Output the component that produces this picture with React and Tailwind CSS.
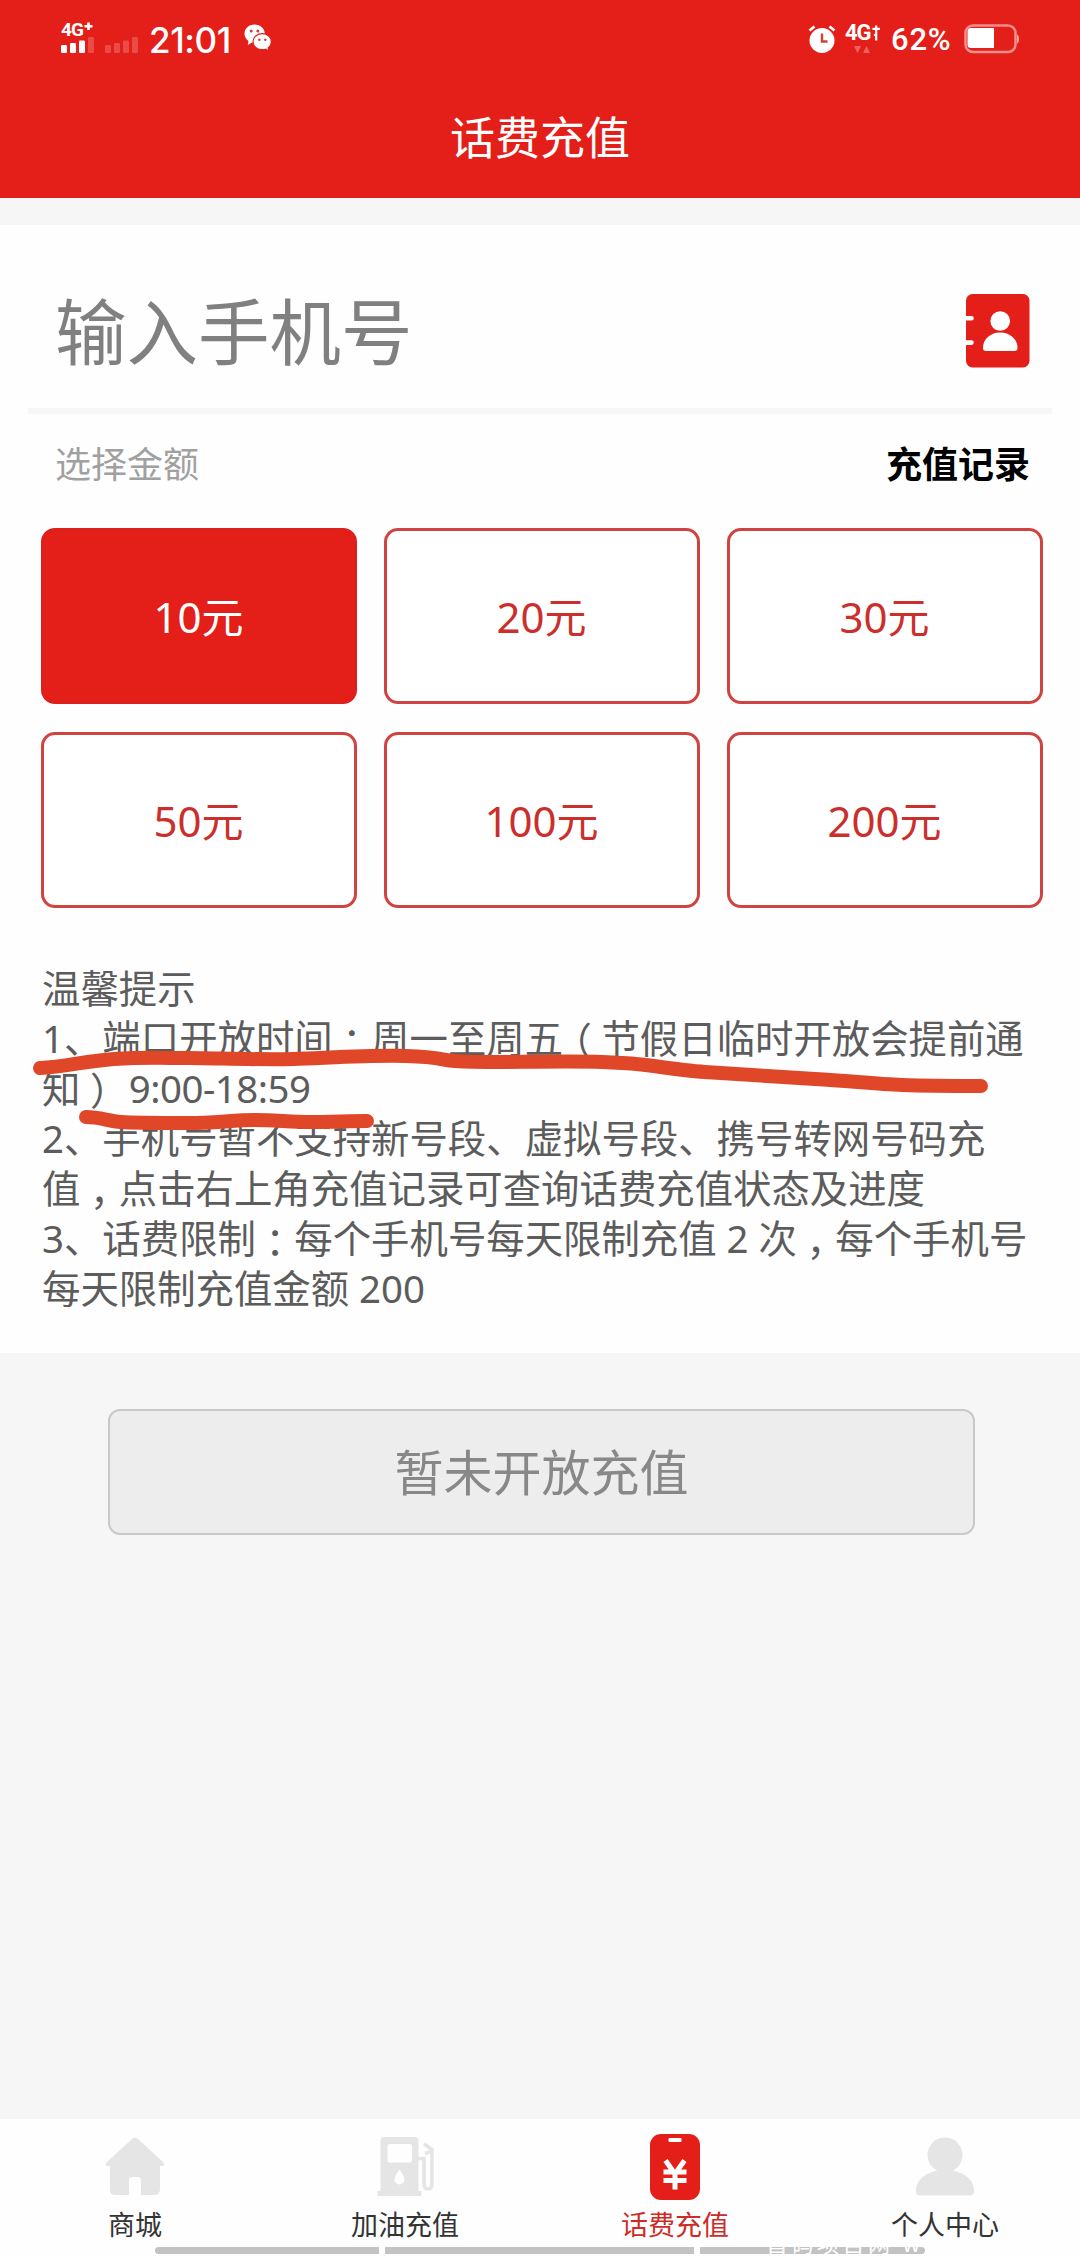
function Signal({ strong }) {
  const bars = [
    [0, 8],
    [9, 10],
    [18, 12.5],
    [27, 16],
  ];
  return (
    <svg width="33" height="16" viewBox="0 0 33 16" className="block">
      {bars.map(([x, h], i) => (
        <rect key={x} x={x} y={16 - h} width="6" height={h} rx="1.2" fill="#fff" opacity={strong && i < 3 ? 1 : 0.2} />
      ))}
    </svg>
  );
}

function WeChat() {
  return (
    <svg width="28" height="28" viewBox="0 0 28 28" className="block">
      <path d="M10.5 0.5C4.900 0.500 0.500 4.500 0.500 9.600c0 3.200 1.500 5.600 4 7.300L3.800 21l4.200-2.500c4.500 1 12.500-2 12.800-8.900C20.800 4.500 16.200 0.500 10.500 0.500z" fill="#fff" />
      <circle cx="7.200" cy="7" r="1.500" fill="#c2423c" />
      <circle cx="13.800" cy="7" r="1.500" fill="#c2423c" />
      <path d="M18.300 9.700c-5.200 0-9.300 3.500-9.300 8s4.100 8 9.300 8c1.200 0 2.300-.2 3.300-.5l3.400 1.900-.8-3.200c2-1.500 3.200-3.700 3.200-6.200 0-4.500-4-8-9.100-8z" fill="#fff" stroke="#e41f1a" strokeWidth="1.200" />
      <circle cx="15.300" cy="15.700" r="1.200" fill="#c2423c" />
      <circle cx="21.300" cy="15.700" r="1.200" fill="#c2423c" />
    </svg>
  );
}

function Alarm() {
  return (
    <svg width="28" height="28" viewBox="0 0 28 28" className="block">
      <circle cx="14" cy="15.500" r="12.500" fill="#fff" />
      <path d="M1.500 5.500L6.500 1.500M26.500 5.500L21.500 1.500" stroke="#fff" strokeWidth="2.800" />
      <path d="M14 8.500V16.500H19.500" fill="none" stroke="#d0403a" strokeWidth="2.400" />
    </svg>
  );
}

function Battery() {
  return (
    <svg width="56" height="30" viewBox="0 0 56 30" className="block">
      <rect x="1.500" y="1.500" width="50" height="26.500" rx="7.500" fill="none" stroke="#fff" strokeOpacity=".5" strokeWidth="2.500" />
      <path d="M7 4H30V24H7Q3.500 24 3.500 20.500V7.500Q3.500 4 7 4Z" fill="#fff" />
      <path d="M53 10.500q2 .5 2 4.500t-2 4.500z" fill="#fff" fillOpacity=".6" />
    </svg>
  );
}

function StatusBar() {
  return (
    <div className="flex h-20 items-start justify-between pr-[60px] pl-[61px] text-white">
      <div className="flex items-start">
        <div className="flex w-[33px] flex-col pt-[22px]">
          <div className='flex h-[15px] items-center font-["Roboto",sans-serif] text-[19px] leading-none font-bold tracking-[-1px]'>
            4G
            <svg width="9" height="9" viewBox="0 0 9 9" className="mb-[7px] ml-px">
              <path d="M4.500 0.500V8M0.500 4.200H8.500" stroke="#fff" strokeWidth="2.600" />
            </svg>
          </div>
          <Signal strong />
        </div>
        <div className="mt-[37px] ml-[11px]">
          <Signal />
        </div>
        <span className='mt-[20px] ml-[11px] w-[83px] font-["Inter",sans-serif] text-[35px] leading-[40px] font-medium tracking-[-0.4px] whitespace-nowrap'>21:01</span>
        <div className="mt-[24px] ml-[12px]">
          <WeChat />
        </div>
      </div>
      <div className="flex items-start">
        <div className="mt-[25px]">
          <Alarm />
        </div>
        <div className="mt-[23px] ml-[9px] flex w-[35px] flex-col">
          <div className='flex h-[19px] items-center font-["Roboto",sans-serif] text-[22px] leading-none font-bold tracking-[-1px]'>
            4G
            <svg width="9" height="18" viewBox="0 0 9 18" className="ml-px">
              <path d="M4.500 1V17M0.500 4.500H8.500M2.500 12L4.500 10" fill="none" stroke="#fff" strokeWidth="2.400" />
            </svg>
          </div>
          <svg width="17" height="8" viewBox="0 0 17 8" className="mt-[4px] ml-[9px]">
            <path d="M0 0H7L3.500 7ZM9 7H16L12.500 0Z" fill="#fff" opacity=".3" />
          </svg>
        </div>
        <span className='mt-[20px] ml-[11px] w-[60px] font-["Roboto",sans-serif] text-[31px] leading-[40px] font-medium tracking-[0.8px] whitespace-nowrap'>62%</span>
        <div className="mt-[24px] ml-[13px]">
          <Battery />
        </div>
      </div>
    </div>
  );
}

function ContactBook() {
  return (
    <svg width="64" height="74" viewBox="0 0 64 74" className="block">
      <rect width="63.500" height="73.500" rx="6.500" fill="#e41f1a" />
      <path d="M0 24.300H5.500M0 48.600H5.500" stroke="#fff" strokeWidth="4.600" strokeLinecap="round" />
      <circle cx="34.200" cy="27" r="9.800" fill="#fff" />
      <path d="M20 57q-3 0-3-3C17 44.500 25 38.500 34.200 38.500S51.500 44.500 51.500 54q0 3-3 3z" fill="#fff" />
    </svg>
  );
}

const amounts = ["10元", "20元", "30元", "50元", "100元", "200元"];

function Amount({ label, active }) {
  return (
    <button
      className={
        active
          ? "flex h-44 items-center justify-center rounded-[14px] border-3 border-[#dc211d] bg-[#e41f1a] pt-[2px] pr-[1px] text-[42px] leading-none text-white"
          : "flex h-44 items-center justify-center rounded-[14px] border-3 border-[#cf4340] bg-white pt-[2px] pr-[1px] text-[42px] leading-none text-[#cb2f2c]"
      }
    >
      {label}
    </button>
  );
}

// A punctuation mark trimmed to its half-width form and centred in a full-width cell.
function Mark({ children }) {
  return (
    <span className="inline-block h-[50px] w-[1em] text-center align-top font-['Noto_Sans_CJK_SC',sans-serif] leading-[50px] [font-feature-settings:'halt']">
      {children}
    </span>
  );
}

function Tips() {
  return (
    <div className="relative mt-[55px] pl-[42px] text-[38.4px] leading-[50px] whitespace-nowrap text-[#5c5c5c]">
      <p className="h-[50px]">温馨提示</p>
      <p className="h-[50px]">1、端口开放时间<Mark>：</Mark>周一至周五<Mark>（</Mark>节假日临时开放会提前通</p>
      <p className="h-[50px]">知<Mark>）</Mark> <span className="tracking-[-0.5px]">9:00-18:59</span></p>
      <p className="h-[50px]">2、手机号暂不支持新号段、虚拟号段、携号转网号码充</p>
      <p className="h-[50px]">值<Mark>，</Mark>点击右上角充值记录可查询话费充值状态及进度</p>
      <p className="h-[50px]">3、话费限制<Mark>：</Mark>每个手机号每天限制充值 2 次<Mark>，</Mark>每个手机号</p>
      <p className="h-[50px]">每天限制充值金额 200</p>
      <svg width="1080" height="200" viewBox="0 963 1080 200" className="absolute top-0 left-0">
        <g fill="none" stroke="#e04628" strokeWidth="14" strokeLinecap="round" strokeLinejoin="round">
          <path d="M40 1068C65 1067 85 1061 114 1059S165 1058 189 1058S260 1060 293 1059S370 1055 406 1056S440 1060 455 1061S480 1062 499 1062S575 1061 602 1062S640 1064 654 1066S690 1071 705 1072S780 1077 815 1079S875 1084 902 1085S950 1086 981 1086" />
          <path d="M86 1117C100 1117 108 1121 121 1122S165 1123 189 1123S235 1120 255 1120S290 1122 310 1122S350 1121 367 1121" />
        </g>
      </svg>
    </div>
  );
}

function HomeIcon() {
  return (
    <svg width="60" height="66" viewBox="0 0 60 66">
      <path d="M27 5Q30 2.500 33 5L58 28Q61 32 56 32H55V55Q55 61 49 61H36V46Q36 43 33 43H27Q24 43 24 46V61H10Q5 61 5 56V32H3Q-1 32 2 28Z" fill="#e5e5e5" />
    </svg>
  );
}

function FuelIcon() {
  return (
    <svg width="60" height="66" viewBox="-2.500 -0.500 60 66">
      <path fillRule="evenodd" d="M3 56.500V6.500Q3 2.500 7 2.500H37Q41 2.500 41 6.500V56.500H44V61.500H0V56.500ZM12 9.500Q10 9.500 10 11.500V26Q10 28 12 28H32.500Q34.500 28 34.500 26V11.500Q34.500 9.500 32.500 9.500ZM22 35Q17 42 17 45A5 5 0 0 0 27 45Q27 42 22 35Z" fill="#e5e5e5" />
      <path d="M40 24H46.500V49Q46.500 54.500 50.500 54.500T54.500 49V15L46.500 9.500M54 17L47.500 19" fill="none" stroke="#e5e5e5" strokeWidth="3.500" />
    </svg>
  );
}

function PhoneIcon() {
  return (
    <svg width="60" height="66" viewBox="0 0 60 66">
      <rect x="5" y="0" width="50" height="66" rx="11" fill="#e41f1a" />
      <rect x="23.500" y="4" width="13" height="4" rx="1" fill="#fff" />
      <path d="M20.500 26.500L30 40L39.500 26.500M18.500 38H41.500M18.500 46.500H41.500M30 38V55.500" fill="none" stroke="#fff" strokeWidth="5" />
    </svg>
  );
}

function UserIcon() {
  return (
    <svg width="60" height="66" viewBox="0 0 60 66">
      <circle cx="30" cy="21" r="17.500" fill="#e5e5e5" />
      <path d="M5 61.500Q1 61.500 1 57C1 44 14 36 30 36S59 44 59 57Q59 61.500 55 61.500Z" fill="#e5e5e5" />
    </svg>
  );
}

const tabs = [
  ["商城", HomeIcon],
  ["加油充值", FuelIcon],
  ["话费充值", PhoneIcon, true],
  ["个人中心", UserIcon],
];

export default function App() {
  return (
    <div className='flex h-[2256px] w-[1080px] flex-col overflow-hidden bg-[#f6f6f6] font-["Noto_Sans","Noto_Sans_CJK_SC",sans-serif]'>
      <header className="h-[198px] shrink-0 bg-[#e41f1a]">
        <StatusBar />
        <h1 className="text-center text-[45px] leading-[115px] text-white">话费充值</h1>
      </header>

      <main className="mt-[27px] h-[1128px] shrink-0 bg-[#fefefe]">
        <div className="mx-[28px] flex h-[189px] items-center justify-between border-b-[6px] border-[#f6f6f6] pt-[31px] pr-[22px] pl-[27px]">
          <span className="text-[71.500px] leading-none text-[#808080]">输入手机号</span>
          <div className="mb-[3px]">
            <ContactBook />
          </div>
        </div>
        <div className="flex h-[114px] items-center justify-between pr-[50px] pb-[13px] pl-[55px] text-[36px]">
          <span className="text-[#a0a0a0]">选择金额</span>
          <span className="font-bold text-black">充值记录</span>
        </div>
        <div className="grid grid-cols-3 gap-x-[27px] gap-y-7 pr-[37px] pl-[41px]">
          {amounts.map((a, i) => (
            <Amount key={a} label={a} active={i === 0} />
          ))}
        </div>
        <Tips />
      </main>

      <div className="mt-14 mr-[105px] ml-[108px] flex h-[126px] items-center justify-center rounded-[12px] border-2 border-[#c8c8c8] bg-[#ededed] text-[49px] leading-none text-[#888]">
        暂未开放充值
      </div>

      <nav className="relative mt-auto grid h-[137px] shrink-0 grid-cols-4 bg-[#fefefe]">
        {tabs.map(([label, Icon, active]) => (
          <div key={label} className="flex flex-col items-center pt-[15px]">
            <Icon />
            <span className={active ? "mt-[5px] text-[27px] leading-[40px] text-[#cc2b28]" : "mt-[5px] text-[27px] leading-[40px] text-[#333]"}>{label}</span>
          </div>
        ))}
        <div className="absolute bottom-[2px] left-[155px] flex h-[7px] w-[770px] gap-[6px]">
          <i className="w-[224px] rounded-l-full bg-[#c3c3c3]" />
          <i className="w-[309px] bg-[#c3c3c3]" />
          <i className="flex-1 rounded-r-full bg-[#c3c3c3]" />
        </div>
        <div className="absolute bottom-[2px] left-[766px] text-[22px] leading-[22px] tracking-[3.500px] whitespace-nowrap text-white">首码项目网 w</div>
      </nav>
    </div>
  );
}
